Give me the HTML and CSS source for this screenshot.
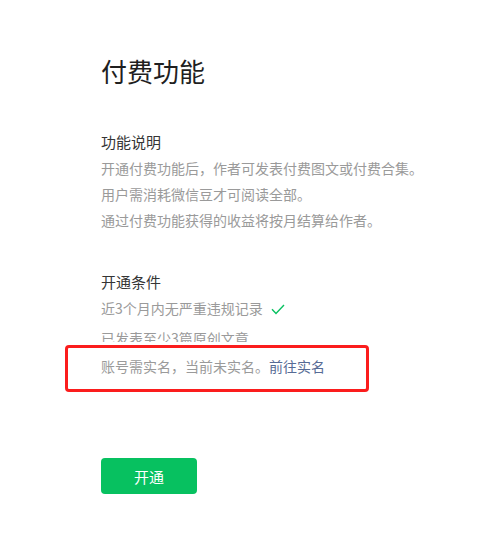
FILE: index.html
```html
<!DOCTYPE html>
<html lang="zh-CN">
<head>
<meta charset="utf-8">
<title>付费功能</title>
<link rel="stylesheet" href="styles.css">
</head>
<body>
<div class="page">
  <h1 class="title">付费功能</h1>
  <section class="section">
    <h2 class="section-title">功能说明</h2>
    <p class="line">开通付费功能后，作者可发表付费图文或付费合集。</p>
    <p class="line">用户需消耗微信豆才可阅读全部。</p>
    <p class="line">通过付费功能获得的收益将按月结算给作者。</p>
  </section>
  <section class="section section-cond">
    <h2 class="section-title">开通条件</h2>
    <p class="line">近3个月内无严重违规记录<svg class="check" width="14" height="11" viewBox="0 0 14 11"><path d="M1 5.2 L5 9.4 L13 1" fill="none" stroke="#07c160" stroke-width="1.4"/></svg></p>
    <p class="line line-gap">已发表至少3篇原创文章</p>
    <div class="mark">
      <p class="line">账号需实名，当前未实名。<a class="link" href="#">前往实名</a></p>
    </div>
  </section>
  <button class="btn">开通</button>
</div>
</body>
</html>
```

FILE: styles.css
```css
html, body {
  margin: 0;
  padding: 0;
  background: #fff;
}
body {
  font-family: "Noto Sans CJK SC", "Noto Sans", sans-serif;
  color: #353535;
}
.page {
  padding: 53px 0 0 101px;
}
.title {
  margin: 0;
  font-size: 26px;
  line-height: 36px;
  font-weight: 400;
  color: #1f1f1f;
}
.section {
  margin-top: 40px;
}
.section-cond {
  margin-top: 36px;
}
.section-title {
  margin: 0;
  font-size: 15px;
  line-height: 26px;
  font-weight: 400;
  color: #353535;
}
.line {
  margin: 0;
  font-size: 14px;
  line-height: 26px;
  color: #9a9a9a;
  white-space: nowrap;
}
.line-gap {
  margin-top: 4px;
}
.check {
  margin-left: 8px;
  vertical-align: -1px;
}
.mark {
  position: relative;
  margin: -6px 0 0 -36px;
  width: 298px;
  padding: 5px 0 10px 33px;
  box-sizing: border-box;
  width: 304px;
  border: 3px solid #fb1d1d;
  border-radius: 4px;
  background: #fff;
  box-shadow: 0 0 0 3px #fff;
}
.link {
  color: #576b95;
  text-decoration: none;
}
.btn {
  display: block;
  margin-top: 66px;
  width: 96px;
  height: 36px;
  border: 0;
  border-radius: 4px;
  background: #07c160;
  color: #fff;
  font-family: "Noto Sans CJK SC", "Noto Sans", sans-serif;
  font-size: 15px;
  padding: 0;
}
```
